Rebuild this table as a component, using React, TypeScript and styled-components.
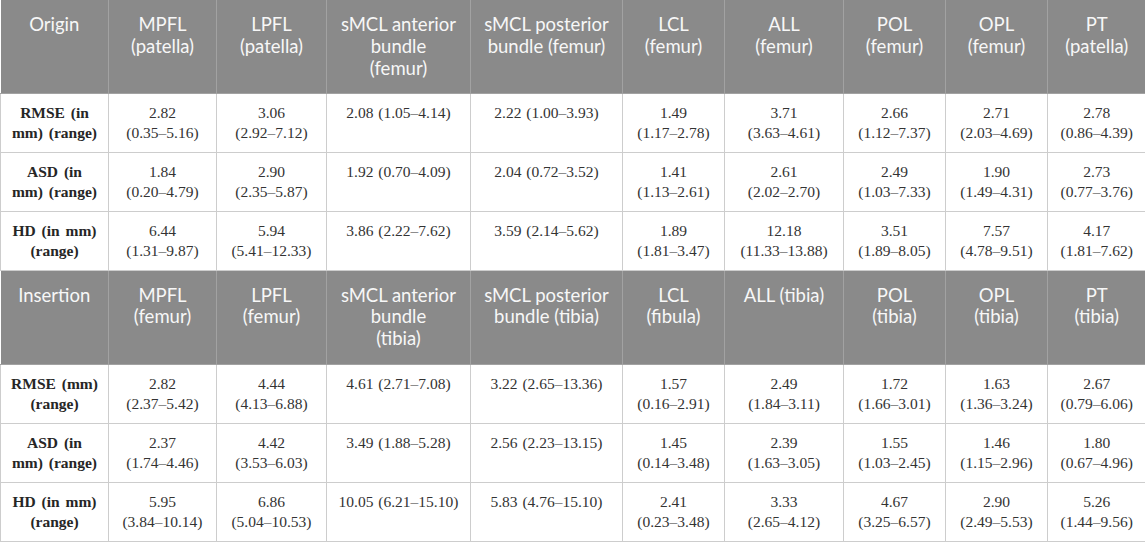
import React from 'react';
import styled, { createGlobalStyle } from 'styled-components';

const GlobalStyle = createGlobalStyle`
    html, body {
        margin: 0;
        padding: 0;
        background: #ffffff;
    }
`

const StyledTable = styled.table`
    width: 1145px;
    border-collapse: collapse;
    table-layout: fixed;
    font-family: "Liberation Serif", "Times New Roman", serif;
`

const StyledCol = styled.col<{ $width: number }>`
    width: ${props => props.$width}px;
`

const StyledHeadRow = styled.tr<{ $height: number }>`
    height: ${props => props.$height}px;
    background-color: #8a8a8a;
`

const StyledHeadCell = styled.th`
    vertical-align: top;
    text-align: center;
    padding: 14px 6px 0;
    font-family: Lato, "Open Sans", sans-serif;
    font-weight: 400;
    font-size: 18.5px;
    line-height: 21.8px;
    color: #f7f7f7;
    white-space: nowrap;
    border-left: 1px solid #a2a2a2;
    border-bottom: 1px solid #a2a2a2;
    &:first-child {
        border-left: none;
    }
`

const StyledDataRow = styled.tr`
    height: 59px;
`

const StyledLabelCell = styled.td`
    vertical-align: top;
    text-align: center;
    padding: 9px 4px 0;
    font-size: 15.5px;
    line-height: 20px;
    font-weight: 700;
    word-spacing: 2px;
    white-space: nowrap;
    color: #262626;
    border: 1px solid #cdcdcd;
    border-top: none;
`

const StyledValueCell = styled.td`
    vertical-align: top;
    text-align: center;
    padding: 9px 4px 0;
    font-size: 15.5px;
    line-height: 20px;
    word-spacing: 1px;
    white-space: nowrap;
    color: #333333;
    border: 1px solid #cdcdcd;
    border-top: none;
    &:last-child {
        border-right: none;
    }
`

const StyledLine = styled.span`
    display: block;
`

const widths = [108, 108, 110, 144, 152, 102, 119, 102, 102, 98];

type Section = {
    title: string;
    heads: string[][];
    rows: { label: string[]; values: string[][] }[];
};

// values that sit on one line in the source table
const oneLine = new Set([2, 3]);

const split = (v: string, col: number) => {
    if (oneLine.has(col)) return [v];
    const i = v.indexOf(' ');
    return [v.slice(0, i), v.slice(i + 1)];
};

const vals = (list: string[]) => list.map((v, i) => split(v, i));

const sections: Section[] = [
    {
        title: 'Origin',
        heads: [
            ['MPFL', '(patella)'],
            ['LPFL', '(patella)'],
            ['sMCL anterior', 'bundle', '(femur)'],
            ['sMCL posterior', 'bundle (femur)'],
            ['LCL', '(femur)'],
            ['ALL', '(femur)'],
            ['POL', '(femur)'],
            ['OPL', '(femur)'],
            ['PT', '(patella)'],
        ],
        rows: [
            {
                label: ['RMSE (in', 'mm) (range)'],
                values: vals(['2.82 (0.35–5.16)', '3.06 (2.92–7.12)', '2.08 (1.05–4.14)', '2.22 (1.00–3.93)', '1.49 (1.17–2.78)', '3.71 (3.63–4.61)', '2.66 (1.12–7.37)', '2.71 (2.03–4.69)', '2.78 (0.86–4.39)']),
            },
            {
                label: ['ASD (in', 'mm) (range)'],
                values: vals(['1.84 (0.20–4.79)', '2.90 (2.35–5.87)', '1.92 (0.70–4.09)', '2.04 (0.72–3.52)', '1.41 (1.13–2.61)', '2.61 (2.02–2.70)', '2.49 (1.03–7.33)', '1.90 (1.49–4.31)', '2.73 (0.77–3.76)']),
            },
            {
                label: ['HD (in mm)', '(range)'],
                values: vals(['6.44 (1.31–9.87)', '5.94 (5.41–12.33)', '3.86 (2.22–7.62)', '3.59 (2.14–5.62)', '1.89 (1.81–3.47)', '12.18 (11.33–13.88)', '3.51 (1.89–8.05)', '7.57 (4.78–9.51)', '4.17 (1.81–7.62)']),
            },
        ],
    },
    {
        title: 'Insertion',
        heads: [
            ['MPFL', '(femur)'],
            ['LPFL', '(femur)'],
            ['sMCL anterior', 'bundle', '(tibia)'],
            ['sMCL posterior', 'bundle  (tibia)'],
            ['LCL', '(fibula)'],
            ['ALL (tibia)'],
            ['POL', '(tibia)'],
            ['OPL', '(tibia)'],
            ['PT', '(tibia)'],
        ],
        rows: [
            {
                label: ['RMSE (mm)', '(range)'],
                values: vals(['2.82 (2.37–5.42)', '4.44 (4.13–6.88)', '4.61 (2.71–7.08)', '3.22 (2.65–13.36)', '1.57 (0.16–2.91)', '2.49 (1.84–3.11)', '1.72 (1.66–3.01)', '1.63 (1.36–3.24)', '2.67 (0.79–6.06)']),
            },
            {
                label: ['ASD (in', 'mm) (range)'],
                values: vals(['2.37 (1.74–4.46)', '4.42 (3.53–6.03)', '3.49 (1.88–5.28)', '2.56 (2.23–13.15)', '1.45 (0.14–3.48)', '2.39 (1.63–3.05)', '1.55 (1.03–2.45)', '1.46 (1.15–2.96)', '1.80 (0.67–4.96)']),
            },
            {
                label: ['HD (in mm)', '(range)'],
                values: vals(['5.95 (3.84–10.14)', '6.86 (5.04–10.53)', '10.05 (6.21–15.10)', '5.83 (4.76–15.10)', '2.41 (0.23–3.48)', '3.33 (2.65–4.12)', '4.67 (3.25–6.57)', '2.90 (2.49–5.53)', '5.26 (1.44–9.56)']),
            },
        ],
    },
];

const App = () => {
    return (
        <>
            <GlobalStyle />
            <StyledTable>
                <colgroup>
                    {widths.map((w, i) => <StyledCol key={i} $width={w} />)}
                </colgroup>
                <tbody>
                    {sections.map((section, si) => (
                        <React.Fragment key={section.title}>
                            <StyledHeadRow $height={si === 0 ? 93 : 94}>
                                <StyledHeadCell>{section.title}</StyledHeadCell>
                                {section.heads.map((h, hi) => (
                                    <StyledHeadCell key={hi}>
                                        {h.map(l => <StyledLine key={l}>{l}</StyledLine>)}
                                    </StyledHeadCell>
                                ))}
                            </StyledHeadRow>
                            {section.rows.map((row, ri) => (
                                <StyledDataRow key={ri}>
                                    <StyledLabelCell>
                                        {row.label.map(l => <StyledLine key={l}>{l}</StyledLine>)}
                                    </StyledLabelCell>
                                    {row.values.map((v, vi) => (
                                        <StyledValueCell key={vi}>
                                            {v.map(l => <StyledLine key={l}>{l}</StyledLine>)}
                                        </StyledValueCell>
                                    ))}
                                </StyledDataRow>
                            ))}
                        </React.Fragment>
                    ))}
                </tbody>
            </StyledTable>
        </>
    );
};

export default App;
